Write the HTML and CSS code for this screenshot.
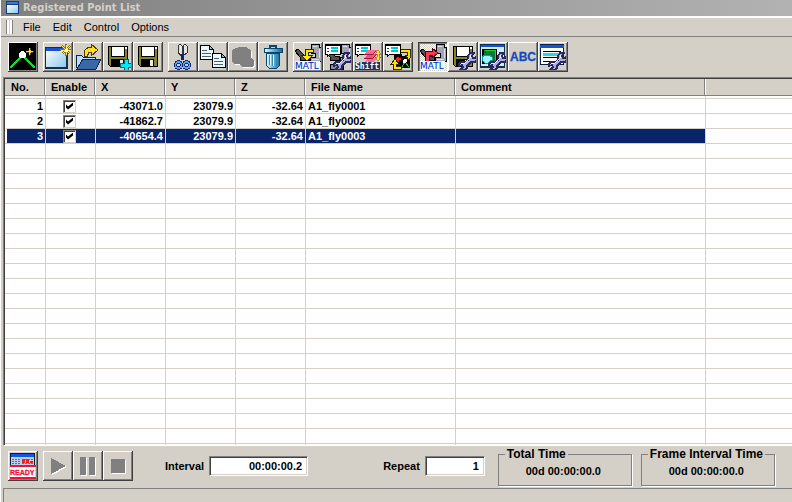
FILE: index.html
```html
<!DOCTYPE html>
<html lang="en">
<head>
<meta charset="utf-8">
<title>Registered Point List</title>
<link rel="stylesheet" href="styles.css">
</head>
<body>
<svg class="defs" aria-hidden="true">
  <defs>
    <linearGradient id="sky" x2="1" y2="1"><stop stop-color="#fff"/><stop offset="1" stop-color="#8fc8ee"/></linearGradient>
    <linearGradient id="metal"><stop stop-color="#f4ffff"/><stop offset=".5" stop-color="#62b8dc"/><stop offset="1" stop-color="#146c9c"/></linearGradient>
    <symbol id="disk" viewBox="0 0 30 30">
      <path d="M5 4H25V25H7L5 23Z" fill="#000"/><path d="M6 5H24V24H7L6 23Z" fill="#84842c"/>
      <path d="M8 4H22V15H8Z" fill="#000"/><path d="M9 5H21V14H9Z" fill="#fff"/><path d="M22 5H24V7H22Z" fill="#fff"/>
      <path d="M8 17H21V25H8Z" fill="#000"/><path d="M17 18H20V24H17Z" fill="#e8e8f0"/>
    </symbol>
    <symbol id="wrench" viewBox="0 0 30 30">
      <path d="M20 18V14L22 11H26L24 14 25 16H27L29 13V17L27 20H23L19 24V26L17 28H12L15 25 14 23 11 24V22L13 20H17Z" fill="#a8acde" stroke="#28285c" stroke-width="1.500"/>
      <path d="M13 21H17L22 16V13" fill="none" stroke="#f0f0ff"/>
    </symbol>
    <symbol id="scope" viewBox="0 0 30 30">
      <path d="M18 2H26V5H28V19H17V15H22V11H18Z" fill="#a4a4b4" stroke="#000"/>
      <path d="M20 4H24M26 7V16M19 17H26" stroke="#e0e0f0" fill="none"/>
      <path d="M2 9 5 7 12 14H16V18H7V15Z" fill="#505054" stroke="#000"/>
    </symbol>
    <symbol id="list" viewBox="0 0 30 30">
      <path d="M2 2H17V12H7L4 15V12H2Z" fill="#fff" stroke="#000"/><path d="M2 3H17" stroke="#000" stroke-width="2"/>
      <path d="M4 6H6M4 9H6" stroke="#203080"/><path d="M8 6H15M8 9H15" stroke="#00c8d0" stroke-width="2"/>
    </symbol>
    <symbol id="matl" viewBox="0 0 30 30">
      <path d="M2 19H27V28H2Z" fill="#e4ffff"/><text x="2" y="27" class="matl-text">MATL</text>
    </symbol>
    <symbol id="burst" viewBox="0 0 30 30">
      <path d="M23 2V14M17 8H29M19 4 27 12M27 4 19 12" stroke="#907020" stroke-width="2"/>
      <path d="M23 3V13M18 8H28M19 4 27 12M27 4 19 12" stroke="#ffe868"/><path d="M22 7H25V10H22Z" fill="#fff"/>
    </symbol>
  </defs>
</svg>

<main class="window">
  <header class="titlebar">
    <svg class="app-icon" viewBox="0 0 13 13" aria-hidden="true"><path d="M0 0H13V13H0Z" fill="#183c80"/><path d="M1 4H12V12H1Z" fill="url(#sky)"/><path d="M1 1H12V3H1Z" fill="#3878d8"/></svg>
    <h1>Registered Point List</h1>
  </header>

  <nav class="menubar" aria-label="Menu">
    <span class="grip"></span>
    <button>File</button><button>Edit</button><button>Control</button><button>Options</button>
  </nav>

  <div class="toolbar" role="toolbar" aria-label="Tools">
    <div class="group">
      <button class="tool" aria-label="Point map"><svg viewBox="0 0 30 30"><path d="M1 1H28V28H1Z" fill="#000"/><path d="M2 26 13 15M16 15 27 26" stroke="#18d838" stroke-width="1.500"/><circle cx="14.500" cy="12.500" r="3.500" fill="#fff"/><path d="M21 6H22V8L23 9H25V10H23L22 11V13H21V11L20 10H18V9H20L21 8Z" fill="#ffd840" stroke="#ffd840" stroke-width=".3"/></svg></button>
    </div>
    <div class="group">
      <button class="tool" aria-label="New"><svg viewBox="0 0 30 30"><path d="M2 5H25V27H2Z" fill="#103050"/><path d="M3 6H23V25H3Z" fill="url(#sky)"/><path d="M3 6H20V9H3Z" fill="#1450d8"/><use href="#burst"/></svg></button>
      <button class="tool" aria-label="Open"><svg viewBox="0 0 30 30"><path d="M3 13H8L10 15H22V19L5 27 3 25Z" fill="#b8e0fc" stroke="#10254c"/><path d="M10 17H28L23 27H4Z" fill="#3868a8" stroke="#10254c"/><path d="M11 14 12 8 16 5H18V2L25 8 18 14V10H16L14 15Z" fill="#ffe020" stroke="#503c00"/></svg></button>
      <button class="tool" aria-label="Save as"><svg viewBox="0 0 30 30"><use href="#disk"/><path d="M21 17H25V21H29V25H25V29H21V25H17V21H21Z" fill="#00e8f8" stroke="#086078"/></svg></button>
      <button class="tool" aria-label="Save"><svg viewBox="0 0 30 30"><use href="#disk"/></svg></button>
    </div>
    <div class="group">
      <button class="tool" aria-label="Cut"><svg viewBox="0 0 30 30"><path d="M10 4 12 2 14 4V14L10 11ZM19 4 17 2 15 4V14L19 11Z" fill="#e4e4e4" stroke="#333"/><path d="M13 12H16V18H13Z" fill="#102090"/><circle cx="10.500" cy="23" r="3" fill="none" stroke="#10287c" stroke-width="3.500"/><circle cx="18.500" cy="23" r="3" fill="none" stroke="#10287c" stroke-width="3.500"/><circle cx="10.500" cy="23" r="3" fill="none" stroke="#58a4f0" stroke-width="1.500"/><circle cx="18.500" cy="23" r="3" fill="none" stroke="#58a4f0" stroke-width="1.500"/></svg></button>
      <button class="tool" aria-label="Copy"><svg viewBox="0 0 30 30"><g id="sheet"><path d="M2 3H11L15 7V17H2Z" fill="#eef8ff" stroke="#000"/><path d="M11 3V7H15Z" fill="#78c8e0" stroke="#000"/><path d="M4 8H9M4 11H13M4 14H13" stroke="#486078"/></g><use href="#sheet" x="12" y="8"/></svg></button>
      <button class="tool" aria-label="Paste" disabled><svg viewBox="0 0 30 30"><path d="M6 8 10 7 12 6H19L21 8 24 9V17L27 19V25L25 26H15L12 23H7L5 21V10Z" fill="#fff"/><path d="M5 7 9 6 11 5H18L20 7 23 8V16L26 18V24L24 25H14L11 22H6L4 20V9Z" fill="#808080"/></svg></button>
      <button class="tool" aria-label="Delete"><svg viewBox="0 0 30 30"><path d="M12 6V4H18V6" fill="none" stroke="#0c446c" stroke-width="2"/><path d="M6 6H24V10H6Z" fill="url(#metal)" stroke="#0c446c"/><path d="M8 11H22L21 24 19 26H11L9 24Z" fill="url(#metal)" stroke="#0c446c"/><path d="M11 13V23M14 13V24M18 13V23" stroke="#3888b0"/><path d="M12 13V23M15 13V24" stroke="#d8faff"/></svg></button>
    </div>
    <div class="group">
      <button class="tool" aria-label="Register from MATL"><svg viewBox="0 0 30 30"><use href="#scope"/><path d="M21 9H14V15" stroke="#302800" stroke-width="4" fill="none"/><path d="M8 13H20L14 19Z" fill="#ffe800" stroke="#302800"/><path d="M20 9H14V15" stroke="#ffe800" stroke-width="2" fill="none"/><use href="#matl"/></svg></button>
      <button class="tool" aria-label="Stage settings"><svg viewBox="0 0 30 30"><use href="#scope"/><path d="M7 22H20V27H7Z" fill="#8c8ca0" stroke="#000"/><use href="#list"/><use href="#wrench"/></svg></button>
      <button class="tool" aria-label="Shift"><svg viewBox="0 0 30 30"><use href="#list"/><path d="M15 8H24L20 12H11Z" fill="#ff6898"/><path d="M15 12H24L20 16H11Z" fill="#f05080"/><path d="M15 16H24L20 20H11Z" fill="#ff6898"/><path d="M11 12H20L23 9M11 16H20L23 13" stroke="#981838" fill="none"/><path d="M25 8 28 12H26V15H28L25 19 22 15H24V12H22Z" fill="#ffe020" stroke="#685000" stroke-width=".5"/><path d="M2 20H27V28H2Z" fill="#203458"/><text x="2" y="27" class="shift-text">Shift</text></svg></button>
      <button class="tool" aria-label="Move to point"><svg viewBox="0 0 30 30"><path d="M11 12H19V26H11ZM19 14H27V26H19Z" fill="#000"/><path d="M19 25 22 20 26 25" stroke="#18c830" fill="none"/><circle cx="22" cy="19" r="2" fill="#fff"/><path d="M15 15V20M13 17H18" stroke="#ff2020" stroke-width="1.500"/><path d="M14 9H26V14M12 20V26H19" stroke="#302800" stroke-width="4" fill="none"/><path d="M22 13H29L26 18ZM8 22 12 17 16 22Z" fill="#ffe000" stroke="#302800"/><path d="M15 9H26V14M12 20V26H18" stroke="#ffe000" stroke-width="2" fill="none"/><use href="#list"/></svg></button>
    </div>
    <div class="group">
      <button class="tool pressed" aria-label="MATL stage" aria-pressed="true"><svg viewBox="0 0 30 30"><use href="#scope"/><path d="M9 19V11H15" stroke="#500010" stroke-width="5" fill="none"/><path d="M14 6 20 11 14 16Z" fill="#f83858" stroke="#500010"/><path d="M9 19V11H16" stroke="#f83858" stroke-width="3" fill="none"/><use href="#matl"/></svg></button>
      <button class="tool" aria-label="Save settings"><svg viewBox="0 0 30 30"><use href="#disk"/><use href="#wrench"/></svg></button>
      <button class="tool" aria-label="Image settings"><svg viewBox="0 0 30 30"><path d="M2 2H27V26H2Z" fill="#103050"/><path d="M3 3H26V24H3Z" fill="#d4ecff"/><path d="M3 3H26V5H3Z" fill="#1450d8"/><path d="M4 7H19V22H4Z" fill="#000"/><path d="M6 8H18V19H12L6 13Z" fill="#087838"/><path d="M17 8V18M7 8H17" stroke="#20d820"/><path d="M4 15 7 13 9 14 11 13 14 15V18L10 21H7L4 18Z" fill="#a0f4f8" stroke="#1098b0"/><use href="#wrench"/></svg></button>
      <button class="tool" aria-label="Labels"><svg viewBox="0 0 30 30"><text x="2" y="19" class="abc-text">ABC</text></svg></button>
      <button class="tool" aria-label="List settings"><svg viewBox="0 0 30 30"><path d="M2 2H26V23H2Z" fill="#102040"/><path d="M3 3H25V22H3Z" fill="#fff"/><path d="M2 3H26V6H2Z" fill="#1454d0"/><path d="M5 9H23M5 15H23M5 19H14" stroke="#000"/><path d="M5 12H23" stroke="#28d8e0" stroke-width="3"/><use href="#wrench"/></svg></button>
    </div>
  </div>

  <section class="grid">
    <table>
      <colgroup><col class="c-no"><col class="c-enable"><col class="c-axis"><col class="c-axis"><col class="c-axis"><col class="c-file"><col class="c-comment"><col></colgroup>
      <thead>
        <tr><th>No.</th><th>Enable</th><th>X</th><th>Y</th><th>Z</th><th>File Name</th><th>Comment</th><td class="filler"></td></tr>
        <tr class="gap"><td></td><td></td><td></td><td></td><td></td><td></td><td></td><td></td></tr>
      </thead>
      <tbody id="points">
        <tr><td>1</td><td class="check"><input type="checkbox" aria-label="Enable point 1" checked></td><td>-43071.0</td><td>23079.9</td><td>-32.64</td><td class="name">A1_fly0001</td><td></td><td></td></tr>
        <tr><td>2</td><td class="check"><input type="checkbox" aria-label="Enable point 2" checked></td><td>-41862.7</td><td>23079.9</td><td>-32.64</td><td class="name">A1_fly0002</td><td></td><td></td></tr>
        <tr class="selected"><td>3</td><td class="check"><input type="checkbox" aria-label="Enable point 3" checked></td><td>-40654.4</td><td>23079.9</td><td>-32.64</td><td class="name">A1_fly0003</td><td></td><td></td></tr>
      </tbody>
    </table>
  </section>

  <footer class="controls">
    <div class="group">
      <button class="tool" aria-label="Ready"><svg viewBox="0 0 30 30"><path d="M2 2H27V14H2Z" fill="#101c30"/><path d="M3 3H26V6H3Z" fill="#1454e8"/><path d="M3 6H26V14H3Z" fill="#b8d0e8"/><path d="M4 8H12M4 10H12M4 12H12M14 8H26M14 12H26" stroke="#607080" stroke-dasharray="2 1"/><path d="M14 9H22M14 11H26" stroke="#f02020" stroke-width="2" stroke-dasharray="3 1"/><path d="M2 14H27V28H2Z" fill="#fff"/><path d="M2 14H28V16H2ZM2 26H28V28H2Z" fill="#f01038"/><text x="2" y="24" class="ready-text">READY</text></svg></button>
    </div>
    <div class="group">
      <button class="tool" aria-label="Play" disabled><svg viewBox="0 0 30 30"><path d="M9 8 24 16 9 24Z" fill="#fff"/><path d="M8 7 23 15 8 23Z" fill="#808080"/></svg></button>
      <button class="tool" aria-label="Pause" disabled><svg viewBox="0 0 30 30"><path d="M8 7H14V25H8ZM17 7H23V25H17Z" fill="#fff"/><path d="M7 6H13V24H7ZM16 6H22V24H16Z" fill="#808080"/></svg></button>
      <button class="tool" aria-label="Stop" disabled><svg viewBox="0 0 30 30"><path d="M9 9H23V23H9Z" fill="#fff"/><path d="M8 8H22V22H8Z" fill="#808080"/></svg></button>
    </div>
    <div class="field interval"><label for="interval">Interval</label><input id="interval" type="text" value="00:00:00.2"></div>
    <div class="field repeat"><label for="repeat">Repeat</label><input id="repeat" type="text" value="1"></div>
    <fieldset><legend>Total Time</legend><output>00d 00:00:00.0</output></fieldset>
    <fieldset><legend>Frame Interval Time</legend><output>00d 00:00:00.0</output></fieldset>
  </footer>
  <div class="statusbar" role="status"></div>
</main>
<script src="grid.js"></script>
</body>
</html>
```

FILE: styles.css
```css
* { box-sizing: border-box; }

body {
  margin: 0;
  background: #d4d0c8;
  color: #000;
  font: bold 11px/13px "Liberation Sans", Arial, sans-serif;
  overflow: hidden;
}

.defs { position: absolute; width: 0; height: 0; }

.window {
  display: flex;
  flex-direction: column;
  height: 100vh;
  border-left: 1px solid #fff;
}

.titlebar {
  display: flex;
  align-items: center;
  gap: 4px;
  flex: none;
  height: 16px;
  padding: 0 0 2px 5px;
  background: linear-gradient(90deg, #808080, #b2b2b2);
}
.app-icon { width: 13px; height: 13px; }
h1 {
  margin: 0;
  color: #d4d0c8;
  font: bold 11px/13px "DejaVu Sans Condensed", "DejaVu Sans", sans-serif;
}

.menubar {
  display: flex;
  align-items: center;
  flex: none;
  height: 21px;
  padding-left: 5px;
  border-top: 2px solid #fff;
  border-bottom: 1px solid #808080;
}
.menubar button {
  padding: 0 6px;
  border: 0;
  background: none;
  font: 11px/13px "Liberation Sans", Arial, sans-serif;
}
.grip {
  width: 7px;
  height: 14px;
  margin-right: 4px;
  border: solid #808080;
  border-width: 0 1px;
  box-shadow: inset 2px 0 #fff, inset -2px 0 #fff;
}

.toolbar {
  display: flex;
  gap: 5px;
  flex: none;
  height: 40px;
  padding: 5px 0 0 7px;
}
.group { display: flex; }

.tool {
  width: 30px;
  height: 30px;
  padding: 0;
  border: 0;
  background: #d4d0c8;
  position: relative;
}
.tool::after {
  content: "";
  position: absolute;
  inset: 0;
  box-shadow: inset -1px -1px #404040, inset 1px 1px #fff, inset -2px -2px #808080;
}
.tool.pressed {
  background: repeating-conic-gradient(#fff 0 25%, #d4d0c8 0 50%) 0 0 / 2px 2px;
}
.tool.pressed::after {
  box-shadow: inset -1px -1px #fff, inset 1px 1px #404040, inset 2px 2px #808080;
}
.tool svg { display: block; width: 30px; height: 30px; shape-rendering: crispEdges; }

.matl-text { font: 9px "DejaVu Sans", sans-serif; fill: #0018d0; }
.shift-text { font: bold 8px "DejaVu Sans Mono", monospace; fill: #fff; }
.abc-text { font: bold 12px "Liberation Sans", sans-serif; fill: #1848c0; stroke: #1848c0; stroke-width: 0.3; }
.ready-text { font: bold 7px "Liberation Sans", sans-serif; fill: #f01038; stroke: #f01038; stroke-width: 0.3; }

.grid {
  flex: 1;
  min-height: 0;
  margin-left: 2px;
  overflow: hidden;
  background: #fff;
  border-top: 1px solid #808080;
  border-left: 1px solid #808080;
  border-bottom: 1px solid #fff;
  box-shadow: inset 1px 1px #404040;
  padding: 1px 0 0 1px;
}
table { width: 100%; table-layout: fixed; border-collapse: separate; border-spacing: 0; }
.c-no { width: 41px; }
.c-enable { width: 50px; }
.c-axis { width: 70px; }
.c-file { width: 150px; }
.c-comment { width: 250px; }

th, thead .filler {
  height: 17px;
  padding: 0 0 0 5px;
  background: #d4d0c8;
  border-bottom: 1px solid #808080;
  text-align: left;
  box-shadow: inset -1px 0 #fff, inset -2px 0 #808080;
}
th:first-child { padding-left: 6px; }
thead .filler { box-shadow: none; }

td {
  height: 15px;
  padding: 0 2px 0 0;
  border-top: 1px solid #d4d0c8;
  border-right: 1px solid #d4d0c8;
  text-align: right;
  line-height: 14px;
}
td:last-child, thead .filler { border-right: 0; }
thead .filler { border-top: 0; }
.gap td { height: 2px; border-top: 0; }
td.name { padding-left: 2px; text-align: left; }
td.check { padding: 0; text-align: center; }
.selected td:not(:last-child) { background: #0a246a; color: #fff; }
.selected td:first-child { border-left: 2px solid #fff; }

.check input {
  appearance: none;
  display: block;
  width: 13px;
  height: 13px;
  margin: 0 0 0 17px;
  border: 1px solid;
  border-color: #808080 #d4d0c8 #d4d0c8 #808080;
  box-shadow: inset 1px 1px #404040;
  background: #fff;
}
.check input:checked::before {
  content: "";
  display: block;
  width: 7px;
  height: 7px;
  margin: 2px;
  background: #000;
  clip-path: polygon(0 29%, 29% 57%, 100% 0, 100% 43%, 29% 100%, 0 71%);
}

.controls {
  display: flex;
  align-items: flex-start;
  flex: none;
  height: 42px;
  padding: 5px 0 0 7px;
}
.controls .group + .group { margin-left: 5px; }
.field { display: flex; align-items: center; gap: 5px; margin-top: 5px; }
.interval { margin-left: 32px; }
.repeat { margin-left: 75px; }
.field input {
  width: 99px;
  height: 20px;
  padding: 0 5px 0 0;
  border: 1px solid;
  border-color: #808080 #fff #fff #808080;
  border-radius: 0;
  box-shadow: inset 1px 1px #404040, inset -1px -1px #d4d0c8;
  background: #fff;
  font: inherit;
  text-align: right;
}
.repeat input { width: 60px; }

fieldset {
  width: 134px;
  height: 38px;
  margin: -3px 0 0 13px;
  padding: 5px 0 0;
  border: 1px solid #808080;
  box-shadow: 1px 1px #fff;
}
fieldset + fieldset { margin-left: 9px; }
legend { margin-left: 6px; padding: 0 2px; font-size: 12px; line-height: 12px; }
fieldset output { display: block; margin-right: 3px; text-align: center; }

.statusbar {
  flex: none;
  height: 14px;
  margin-left: 2px;
  border-top: 1px solid #808080;
  border-left: 1px solid #808080;
}
```

FILE: grid.js
```js
// Fill the rest of the list with blank rows.
const body = document.getElementById("points");
for (let i = body.rows.length; i < 60; i++) {
  const row = body.insertRow();
  for (let c = 0; c < 8; c++) row.insertCell();
}
```
